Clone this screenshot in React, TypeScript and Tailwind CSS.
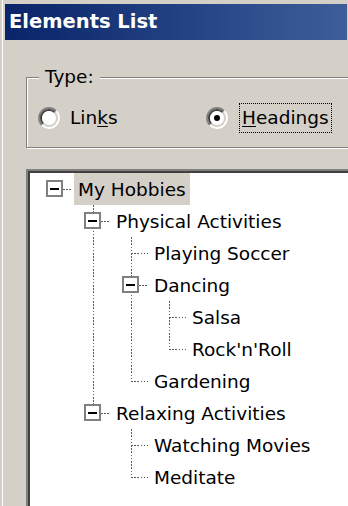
type Node = { label: string; selected?: boolean; children?: Node[] };

const hobbies: Node[] = [
  {
    label: "My Hobbies",
    selected: true,
    children: [
      {
        label: "Physical Activities",
        children: [
          { label: "Playing Soccer" },
          { label: "Dancing", children: [{ label: "Salsa" }, { label: "Rock'n'Roll" }] },
          { label: "Gardening" },
        ],
      },
      {
        label: "Relaxing Activities",
        children: [{ label: "Watching Movies" }, { label: "Meditate" }],
      },
    ],
  },
];

type Row = { node: Node; guides: boolean[]; first: boolean; last: boolean };

function flatten(nodes: Node[], guides: boolean[], rows: Row[]) {
  nodes.forEach((node, i) => {
    const last = i === nodes.length - 1;
    rows.push({ node, guides, first: guides.length === 0 && i === 0, last });
    if (node.children) flatten(node.children, [...guides, !last], rows);
  });
  return rows;
}

const vDots =
  "absolute left-[19px] w-px bg-[image:repeating-linear-gradient(to_bottom,#5a5a5a_0_1.6px,transparent_1.6px_3.2px)]";
const hDots =
  "absolute top-[16px] h-px bg-[image:repeating-linear-gradient(to_right,#5a5a5a_0_1.6px,transparent_1.6px_3.2px)]";

function Radio({ checked }: { checked?: boolean }) {
  return (
    <svg width="22" height="22" viewBox="0 0 22 22" className="shrink-0">
      <path d="M3.93 18.07 A10 10 0 0 1 18.07 3.93" stroke="#808080" strokeWidth="2" fill="none" />
      <path d="M18.07 3.93 A10 10 0 0 1 3.93 18.07" stroke="#ffffff" strokeWidth="2" fill="none" />
      <path d="M5.34 16.66 A8 8 0 0 1 16.66 5.34" stroke="#404040" strokeWidth="2" fill="none" />
      <path d="M16.66 5.34 A8 8 0 0 1 5.34 16.66" stroke="#d4d0c8" strokeWidth="2" fill="none" />
      <circle cx="11" cy="11" r="7" fill="#ffffff" />
      {checked && <circle cx="11" cy="11" r="3" fill="#000000" />}
    </svg>
  );
}

function TreeRow({ row }: { row: Row }) {
  const hasBox = !!row.node.children;
  return (
    <div className="flex h-[32px]">
      {row.guides.map((cont, i) => (
        <div key={i} className="relative w-[38px] shrink-0">
          {cont && <div className={`${vDots} top-0 h-full`} />}
        </div>
      ))}
      <div className="relative w-[38px] shrink-0">
        {!row.first && <div className={`${vDots} top-0 h-[16px]`} />}
        {!row.last && <div className={`${vDots} top-[16px] h-[16px]`} />}
        {hasBox ? (
          <>
            <div className={`${hDots} left-[27px] w-[10px]`} />
            <div className="absolute left-[10px] top-[7px] flex h-[17px] w-[17px] items-center justify-center border-2 border-[#808080] bg-white">
              <div className="h-[2px] w-[9px] bg-black" />
            </div>
          </>
        ) : (
          <div className={`${hDots} left-[19px] w-[17px]`} />
        )}
      </div>
      <span
        className={`whitespace-nowrap px-[4px] pt-[1px] leading-[31px] text-black ${
          row.node.selected ? "bg-[#d4d0c8]" : ""
        }`}
      >
        {row.node.label}
      </span>
    </div>
  );
}

export default function App() {
  const rows = flatten(hobbies, [], []);
  return (
    <div className="h-[506px] w-[348px] overflow-hidden bg-[#d4d0c8] pl-[2px] font-['DejaVu_Sans',sans-serif] text-[18.5px]">
      <div className="h-full border-l border-white pl-[2px] pt-[4px]">
        <div className="flex h-[36px] w-[342px] items-center bg-linear-to-r from-[#0a246a] to-[#3d5e9a] pl-[4px] text-[19.5px] font-bold text-white">
          Elements List
        </div>

        <div className="relative ml-[21px] mt-[37px] h-[71px] w-[360px] border border-[#808080] shadow-[inset_1px_1px_0_#ffffff,1px_1px_0_#ffffff]">
          <span className="absolute left-[12px] top-[-13px] bg-[#d4d0c8] px-[6px] leading-[24px] text-black">
            Type:
          </span>
          <div className="mt-[25px] flex h-[30px] items-center pl-[11px] text-black">
            <div className="flex w-[168px] items-center gap-[10px]">
              <Radio />
              <span>
                Lin<span className="underline underline-offset-2">k</span>s
              </span>
            </div>
            <div className="flex items-center gap-[11px]">
              <Radio checked />
              <span className="border border-dotted border-black px-[2px] leading-[28px]">
                <span className="underline underline-offset-2">H</span>eadings
              </span>
            </div>
          </div>
        </div>

        <div className="ml-[21px] mt-[21px] h-[400px] w-[400px] border-l-2 border-t-2 border-[#808080]">
          <div className="h-full border-l-2 border-t-2 border-[#404040] bg-white pl-[6px]">
            {rows.map((row) => (
              <TreeRow key={row.node.label} row={row} />
            ))}
          </div>
        </div>
      </div>
    </div>
  );
}
